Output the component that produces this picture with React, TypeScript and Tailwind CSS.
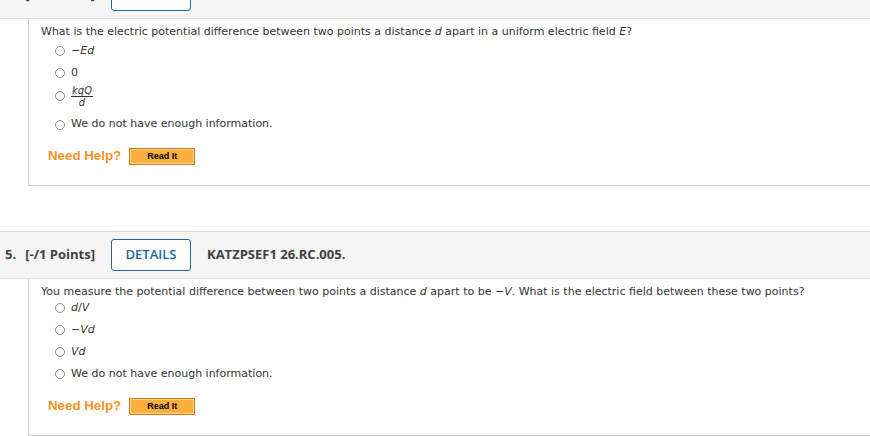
const font = { fontFamily: '"DejaVu Sans", Verdana, sans-serif' };
const arial = { fontFamily: '"Liberation Sans", Arial, sans-serif' };
const open = { fontFamily: '"Open Sans", "DejaVu Sans", sans-serif' };

const Radio = () => (
  <span className="inline-block w-[10px] h-[10px] rounded-full border border-[#8a8a8a] bg-white shrink-0" />
);

const Option = ({ children, h = "h-[22px]" }: { children: React.ReactNode; h?: string }) => (
  <div className={`flex items-center gap-[6px] pl-[14px] ${h}`}>
    <Radio />
    <span className="text-[11px] text-[#333]">{children}</span>
  </div>
);

const Help = ({ mt }: { mt: string }) => (
  <div className={`flex items-center gap-[8px] pl-[7px] h-[20px] ${mt}`}>
    <span className="text-[13.3px] font-bold text-[#f39322]" style={arial}>
      Need Help?
    </span>
    <button
      className="w-[66px] h-[17px] border border-[#c9791a] bg-[#fbb03b] shadow-[inset_0_0_0_1px_#fdd28a] text-[9px] font-bold text-black leading-none"
      style={arial}
    >
      Read It
    </button>
  </div>
);

const Header = ({ num, code }: { num: string; code: string }) => (
  <div className="h-[48px] bg-[#f5f5f5] border-y border-[#dcdcdc] flex items-center text-[#404040]" style={open}>
    <span className="w-[111px] pl-[5px] text-[13px] font-bold">
      {num}
      <span className="ml-[9px]">[-/1 Points]</span>
    </span>
    <span className="w-[80px] h-[32px] rounded-[3px] border border-[#1d679e] bg-white flex items-center justify-center text-[13px] font-semibold text-[#1d679e]">
      DETAILS
    </span>
    <span className="ml-[16px] text-[13px] font-bold">{code}</span>
  </div>
);

const I = ({ children }: { children: React.ReactNode }) => <i className="italic">{children}</i>;

export default function App() {
  return (
    <div className="w-[870px] h-[436px] overflow-hidden bg-white" style={font}>
      <div className="-mt-[29px]">
        <Header num="4." code="KATZPSEF1 26.RC.004." />
        <div className="ml-[28px] border-l border-b border-[#cccccc] h-[167px] pl-[12px] pt-[7px]">
          <p className="text-[11px] text-[#333] h-[14px] leading-[12px]">
            What is the electric potential difference between two points a distance <I>d</I> apart in a uniform electric field <I>E</I>?
          </p>
          <Option>
            −<I>Ed</I>
          </Option>
          <Option>0</Option>
          <div className="flex items-center gap-[6px] pl-[14px] h-[24px]">
            <Radio />
            <span className="inline-flex flex-col items-center text-[10px] text-[#333] leading-[11px]">
              <span className="border-b border-[#333] px-[1px]">
                <I>kqQ</I>
              </span>
              <I>d</I>
            </span>
          </div>
          <Option h="h-[33px]">We do not have enough information.</Option>
          <Help mt="mt-[5px]" />
        </div>
        <div className="h-[45px]" />
        <Header num="5." code="KATZPSEF1 26.RC.005." />
        <div className="ml-[28px] border-l border-b border-[#cccccc] h-[157px] pl-[12px] pt-[8px]">
          <p className="text-[11px] text-[#333] h-[10px] leading-[10px]">
            You measure the potential difference between two points a distance <I>d</I> apart to be −<I>V</I>. What is the electric field between these two points?
          </p>
          <Option>
            <I>d</I>/<I>V</I>
          </Option>
          <Option>
            −<I>Vd</I>
          </Option>
          <Option>
            <I>Vd</I>
          </Option>
          <Option>We do not have enough information.</Option>
          <Help mt="mt-[11px]" />
        </div>
      </div>
    </div>
  );
}
